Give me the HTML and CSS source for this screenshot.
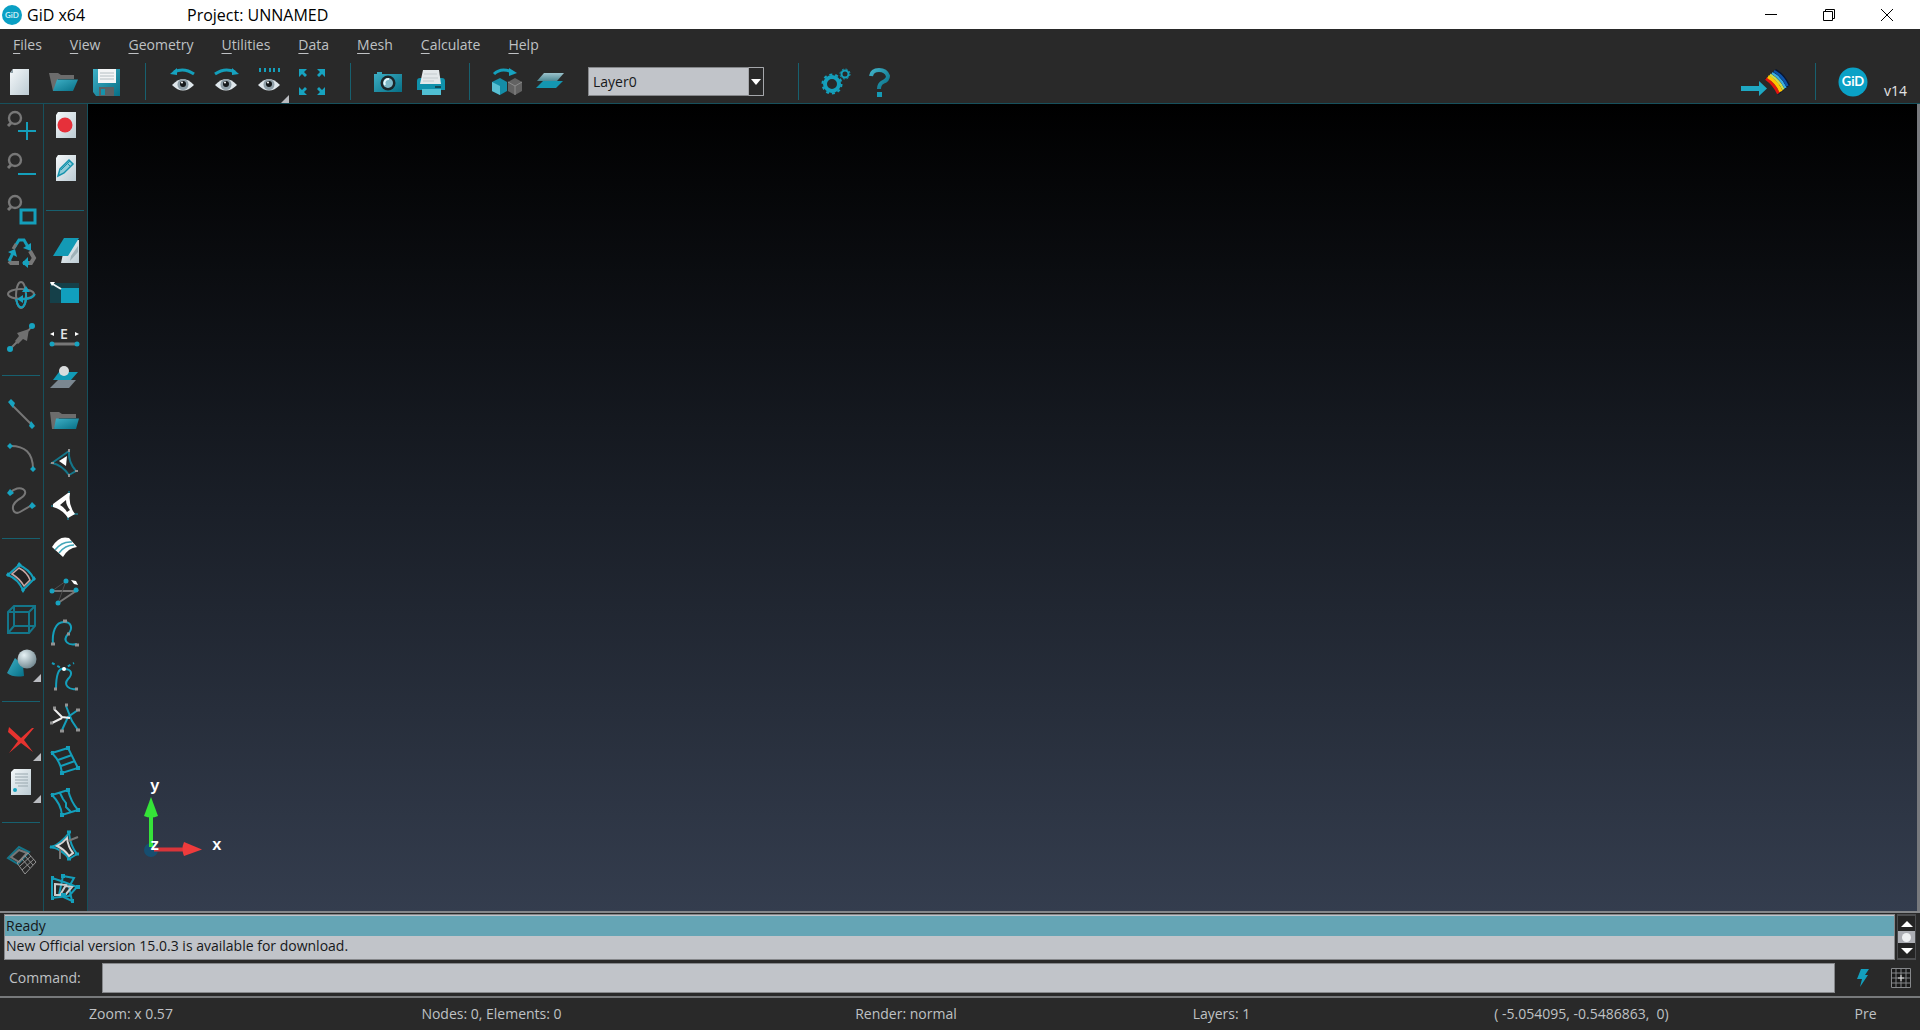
FILE: index.html
```html
<!DOCTYPE html>
<html lang="en">
<head>
<meta charset="utf-8">
<title>GiD x64</title>
<link rel="stylesheet" href="styles.css">
</head>
<body>
<svg class="defs" aria-hidden="true">
  <defs>
    <linearGradient id="paper" x1="0" y1="0" x2="1" y2="1"><stop offset="0" stop-color="#f4f8fa"/><stop offset="1" stop-color="#bccbd3"/></linearGradient>
    <linearGradient id="teal" x1="0" y1="0" x2="1" y2="1"><stop offset="0" stop-color="#3fb0c6"/><stop offset="1" stop-color="#066f86"/></linearGradient>
    <linearGradient id="sheet" x1="0" y1="0" x2="0" y2="1"><stop offset="0" stop-color="#9cc3cc"/><stop offset="1" stop-color="#4d8893"/></linearGradient>
    <radialGradient id="ball" cx=".35" cy=".3" r=".75"><stop offset="0" stop-color="#e6f2f5"/><stop offset="1" stop-color="#71878f"/></radialGradient>
    <g id="lens"><circle cx="15" cy="14" r="6" fill="none" stroke="#777" stroke-width="2.4"/><path d="M11 19 8 22" stroke="#777" stroke-width="3"/></g>
    <g id="eye"><path d="M10 24Q21 12 32 24 21 35 10 24Z" fill="#dfe7ec"/><circle cx="21" cy="23.500" r="5.500" fill="#8f9fa8"/><circle cx="21" cy="23" r="3" fill="#15191b"/><circle cx="20" cy="21.500" r="1" fill="#fff"/></g>
    <path id="corner" d="M41 34v8h-8z" fill="#b9bbc0"/>
  </defs>
</svg>

<header class="titlebar">
  <svg class="app-logo" width="20" height="20" viewBox="0 0 20 20"><circle cx="10" cy="10" r="10" fill="#0a9fc4"/><text x="10" y="13" class="logo-text-small">GiD</text></svg>
  <span class="app-name">GiD x64</span>
  <span class="project">Project: UNNAMED</span>
  <div class="window-controls">
    <button aria-label="Minimize"><svg width="14" height="14" viewBox="0 0 14 14"><path d="M1 6.500h12"/></svg></button>
    <button aria-label="Restore"><svg width="14" height="14" viewBox="0 0 14 14"><path d="M1.500 3.500h9v9h-9zM3.500 3V1.500h9v9H11"/></svg></button>
    <button aria-label="Close"><svg width="14" height="14" viewBox="0 0 14 14"><path d="M1 1 13 13M13 1 1 13"/></svg></button>
  </div>
</header>

<nav class="menubar">
  <button><u>F</u>iles</button><button><u>V</u>iew</button><button><u>G</u>eometry</button><button><u>U</u>tilities</button><button><u>D</u>ata</button><button><u>M</u>esh</button><button><u>C</u>alculate</button><button><u>H</u>elp</button>
</nav>

<div class="toolbar">
  <button class="tool" aria-label="New"><svg viewBox="0 0 42 42"><path d="M13 8H29V34H10V12Z" fill="url(#paper)"/><path d="M10 12h3V8z" fill="#8fa0a8"/></svg></button>
  <button class="tool" aria-label="Open"><svg viewBox="0 0 42 42"><path d="M6 12h9l3 2h13v4H15l-3 12h-2z" fill="#6c6c6c"/><path d="M14 18.500H35L30 30H10Z" fill="url(#teal)"/></svg></button>
  <button class="tool" aria-label="Save"><svg viewBox="0 0 42 42"><path d="M7 8H34V35H10L7 31Z" fill="url(#teal)"/><path d="M12 8H30V22H12Z" fill="#f3f5f6"/><path d="M14 12h14M14 15h14M14 18h14" stroke="#b4bec2"/><path d="M13 26h15v9H13z" fill="#5b6164"/><path d="M15 28h4v6h-4z" fill="#1593ac"/></svg></button>
  <span class="sep"></span>
  <button class="tool" aria-label="Previous view"><svg viewBox="0 0 42 42"><use href="#eye"/><path d="M12 11Q22 6 32 13" class="t w3"/><path d="M8 13 15 7v7z" class="tf"/></svg></button>
  <button class="tool" aria-label="Next view"><svg viewBox="0 0 42 42"><use href="#eye"/><path d="M10 13Q20 6 30 11" class="t w3"/><path d="M34 13 27 7v7z" class="tf"/></svg></button>
  <button class="tool" aria-label="Views"><svg viewBox="0 0 42 42"><use href="#eye"/><path d="M12 7v4M17 7v4M22 7v4M26 7v4M31 7v4" class="t w2"/><use href="#corner"/></svg></button>
  <button class="tool" aria-label="Zoom frame"><svg viewBox="0 0 42 42"><path d="M8 8h8l-3 3 3 3-2 2-3-3-3 3zM34 8v8l-3-3-3 3-2-2 3-3-3-3zM8 34v-8l3 3 3-3 2 2-3 3 3 3zM34 34h-8l3-3-3-3 2-2 3 3 3-3z" class="tf"/></svg></button>
  <span class="sep"></span>
  <button class="tool" aria-label="Snapshot"><svg viewBox="0 0 42 42"><path d="M7 13h3v-2h5v2h20v18H7z" fill="url(#teal)"/><circle cx="21" cy="22" r="7.500" fill="#1b2529"/><circle cx="21" cy="22" r="5" fill="#7fb9c9"/><path d="M18 24a4 4 0 0 1 4-6" stroke="#e8fbff" stroke-width="2" fill="none"/></svg></button>
  <button class="tool" aria-label="Print"><svg viewBox="0 0 42 42"><path d="M7 20q0-3 3-3h22q3 0 3 3v9H7z" fill="#0f91ab"/><path d="M12 28h19v6H12z" fill="#50bfd3"/><path d="M13 9h16l2 14H10z" fill="#e3e8ea"/><path d="M14 13h13M13 17h15M13 20h11" stroke="#c4cbce"/><path d="M25 26h6" stroke="#114a58" stroke-width="2"/></svg></button>
  <span class="sep"></span>
  <button class="tool" aria-label="Pre or postprocess"><svg viewBox="0 0 42 42"><path d="M8 13Q15 6 26 11" class="t w3"/><path d="M23 7 31 12 23 15z" class="tf"/><path d="M6 21 14 17 21 21V30L14 34 6 30Z" fill="#148da7"/><path d="M6 21 14 25V34L6 30Z" fill="#59bfd2"/><path d="M22 21 29 17 36 21V30L29 34 22 30Z" fill="#626262"/><path d="M22 21 29 25 36 21M29 25v9" stroke="#8b8b8b" fill="none"/></svg></button>
  <button class="tool" aria-label="Layers"><svg viewBox="0 0 42 42"><path d="M14 20H34L27 27H7Z" fill="#1496b1"/><path d="M15 12H35L28 20H8Z" fill="url(#sheet)"/></svg></button>
  <div class="combo">
    <select aria-label="Layer"><option>Layer0</option></select>
    <svg class="combo-arrow" width="16" height="29" viewBox="0 0 16 29"><path d="M.5.500h15v28H.5z" fill="#292929" stroke="#a5a7ab"/><path d="M3 12h10l-5 6z" fill="#fff"/></svg>
  </div>
  <span class="sep"></span>
  <button class="tool" aria-label="Preferences"><svg viewBox="0 0 42 42"><circle cx="17" cy="23" r="7" class="t w4"/><circle cx="17" cy="23" r="9.500" class="t w2" stroke-dasharray="3 2.970"/><circle cx="30" cy="13" r="3.500" class="t w2"/><circle cx="30" cy="13" r="5" class="t" stroke-dasharray="2 1.930"/></svg></button>
  <button class="tool" aria-label="Help"><svg viewBox="0 0 42 42"><path d="M13 15Q14 9 21 9T30 15Q30 19 25 21 21 23 21 28" fill="none" stroke="url(#teal)" stroke-width="4"/><path d="M19 31h5v5h-5z" fill="#159ab4"/></svg></button>
  <div class="brand">
    <button class="tool wide" aria-label="Switch to postprocess"><svg viewBox="0 0 52 42"><path d="M2 25H20V20L28 27.500 20 35V30H2Z" fill="#1fa8c3"/><path d="M26 18Q35 23 39 34L51 24Q46 13 37 8Z" fill="#081633"/><path d="M27 17.500Q35 23 39.500 32.500" stroke="#e3140f" stroke-width="3" fill="none"/><path d="M29 15.500Q38 21 42 30.500" stroke="#ffc400" stroke-width="3.500" fill="none"/><path d="M31 13.500Q40 19 44.500 28.500" stroke="#c8dc4c" stroke-width="2.500" fill="none"/><path d="M33 12Q42 17 46.500 27" stroke="#3bade0" stroke-width="2.500" fill="none"/><path d="M35 10Q44 15 48.500 25" stroke="#0c54ac" stroke-width="2.500" fill="none"/></svg></button>
    <span class="sep"></span>
    <svg class="gid" width="30" height="30" viewBox="0 0 30 30"><circle cx="15" cy="15" r="14.500" fill="#0aa1c6"/><text x="15" y="19" class="logo-text">GiD</text></svg>
    <span class="version">v14</span>
  </div>
</div>

<main class="workspace">
  <div class="column">
    <button class="tool" aria-label="Zoom in"><svg viewBox="0 0 42 42"><use href="#lens"/><path d="M18 27h18M27 18v18" class="t w2"/></svg></button>
    <button class="tool" aria-label="Zoom out"><svg viewBox="0 0 42 42"><use href="#lens"/><path d="M18 28h18" class="t w2"/></svg></button>
    <button class="tool" aria-label="Zoom window"><svg viewBox="0 0 42 42"><use href="#lens"/><path d="M21 22h14v13H21z" class="t w3"/></svg></button>
    <button class="tool" aria-label="Redraw"><svg viewBox="0 0 42 42"><path d="M14 18 19 10h5l4 7" class="t w3"/><path d="M31 13v8l-8-3z" class="tf"/><path d="M30 21 34 28 31 33 27 33" class="g w4"/><path d="M23 33h6" class="t w4"/><path d="M22 33 28 27v11z" class="tf"/><path d="M19 33H11L9 31" class="g w4"/><path d="M9 31 13 23" class="t w3"/><path d="M8 22 15 19 17 27z" class="tf"/><path d="M13 19 16 14" class="g w3"/></svg></button>
    <button class="tool" aria-label="Rotate"><svg viewBox="0 0 42 42"><ellipse cx="21" cy="23" rx="5" ry="13" class="g w2"/><ellipse cx="21" cy="22" rx="13" ry="5" class="g w2"/><path d="M16 27Q18 37 23 35 27 31 26 21M21 27Q32 28 35 22" class="t w2"/><path d="M22 20h8l-4-6zM23 23v8l-6-4z" class="tf"/></svg></button>
    <button class="tool" aria-label="Pan"><svg viewBox="0 0 42 42"><path d="M10 35 22 23M28 17 32 12" class="g w2"/><path d="M29 15 27 27 23 25 18 30 15 27 19 22 17 19Z" fill="#707070"/><circle cx="10" cy="35" r="3" class="tf"/><circle cx="32" cy="12" r="3" class="tf"/></svg></button>
    <span class="rule"></span>
    <button class="tool" aria-label="Line"><svg viewBox="0 0 42 42"><path d="M11 11 32 32" class="g w2"/><path d="m8 9 3-3 4 4-2 5zM29 33l2-5 4 5-3 3z" class="tf"/></svg></button>
    <button class="tool" aria-label="Arc"><svg viewBox="0 0 42 42"><path d="M9 11Q33 10 33 34" class="g w2"/><path d="m7 11 3-3 3 3-3 3zM30 34l3-3 3 3-3 3z" class="tf"/></svg></button>
    <button class="tool" aria-label="NURBS line"><svg viewBox="0 0 42 42"><path d="M10 16C19 6 32 14 21 21 8 28 13 39 20 35L32 28" class="g w2"/><path d="m7 16 3-4 4 4-4 3zM29 29l3-4 4 4-4 3z" class="tf"/></svg></button>
    <span class="rule"></span>
    <button class="tool" aria-label="Surface"><svg viewBox="0 0 42 42"><path d="M19 9 8 19Q18 23 23 34L34 23Q29 13 19 9Z" class="t w2"/><path d="M19 12 12 18Q20 23 24 30L30 24Q27 16 19 12Z" fill="#222" stroke="#c9a9a6" stroke-width="1.500"/><path d="m19 6 3 3-3 2-2-2zM8 16l2 3-2 2-2-2zM23 31l2 3-2 3-2-3zM34 20l2 3-2 2-2-2z" class="tf"/></svg></button>
    <button class="tool" aria-label="Volume"><svg viewBox="0 0 42 42"><path d="M8 14 14 8H35V28L29 35H8ZM8 14H29V35M29 14 35 8M14 8V28H35M8 35 14 28" class="d w2"/></svg></button>
    <button class="tool" aria-label="Solids"><svg viewBox="0 0 42 42"><path d="M15 18 7 33Q13 38 24 36L23 25Z" fill="url(#teal)"/><circle cx="27" cy="19" r="9.500" fill="url(#ball)"/><use href="#corner"/></svg></button>
    <span class="rule"></span>
    <button class="tool" aria-label="Delete"><svg viewBox="0 0 42 42"><path d="M9 8 21 19 32 9H34L24 21 33 33 21 24 9 34 18 22 8 13Z" fill="#e6332f"/><use href="#corner"/></svg></button>
    <button class="tool" aria-label="List"><svg viewBox="0 0 42 42"><path d="M14 8H31V34H11V11Z" fill="url(#paper)"/><path d="M15 13h13M15 16h13M15 19h13M15 22h13M18 25h10" stroke="#98a7ae"/><circle cx="15" cy="29" r="2" class="tf"/><use href="#corner"/></svg></button>
    <span class="rule"></span>
    <button class="tool" aria-label="Generate mesh"><svg viewBox="0 0 42 42"><path d="M19 7 8 18 18 24 29 12Z" class="d w2"/><path d="M19 10 11 17 19 22 27 13Z" class="g w2"/><path d="M28 13 17 23 25 34 36 22ZM25 16 33 25M22 19 30 28M20 26 31 16M22 30 34 19" class="m"/></svg></button>
  </div>

  <div class="column second">
    <button class="tool" aria-label="Record macro"><svg viewBox="0 0 42 42"><path d="M14 8H32V34H12V11Z" fill="url(#paper)"/><circle cx="21" cy="21" r="7.500" fill="#e6303a"/></svg></button>
    <button class="tool" aria-label="Edit macro"><svg viewBox="0 0 42 42"><path d="M14 8H32V34H12V11Z" fill="url(#paper)"/><path d="M14 29 16 22 25 13 29 17 20 26Z" fill="#8fcbd8" stroke="#1493ad" stroke-width="1.500"/><path d="M17 23 26 14M22 15 27 20" stroke="#1493ad"/></svg></button>
    <span class="rule tall"></span>
    <button class="tool" aria-label="Erase layer"><svg viewBox="0 0 42 42"><path d="M22 10H35V33H17Z" fill="url(#paper)"/><path d="M20 8H35L24 26H9Z" fill="#139ab5"/><path d="M27 26 34 16V22L26 31Z" fill="#9fb1b8"/></svg></button>
    <button class="tool" aria-label="Window to layer"><svg viewBox="0 0 42 42"><path d="M6 11H35V31H6Z" fill="#154049"/><path d="M17 16H35V31H17Z" fill="#119fbd"/><path d="M7 11 17 17" stroke="#eef4f5" stroke-width="2"/><path d="m6 10 5 0-3 4z" fill="#fff"/></svg></button>
    <button class="tool" aria-label="Entity length"><svg viewBox="0 0 42 42"><path d="M9 29H33" class="g w3"/><circle cx="8" cy="29" r="2.500" class="tf"/><circle cx="33" cy="29" r="2.500" class="tf"/><text x="20" y="24" class="letter">E</text><path d="m6 19 4-2v4zM35 19l-4-2v4z" fill="#fff"/></svg></button>
    <button class="tool" aria-label="Send to layer"><svg viewBox="0 0 42 42"><path d="M14 23H32L25 31H6Z" fill="#7b8790"/><path d="M15 15H34L27 23H9Z" fill="#119ab5"/><circle cx="20" cy="14" r="5" fill="#d9dcdd"/></svg></button>
    <button class="tool" aria-label="Layer folder"><svg viewBox="0 0 42 42"><path d="M6 12h9l3 2h14v4H15l-5 11H8z" fill="#6c6c6c"/><path d="M12 18.500H35L32 29H10Z" fill="url(#teal)"/></svg></button>
    <button class="tool" aria-label="Nodes"><svg viewBox="0 0 42 42"><path d="M8 21 25 9Q24 20 32 29L25 33Q18 23 8 21Z" class="d w2"/><path d="M15 19 23 14 22 24Z" fill="#fff"/><path d="M7 21h3M25 7v3M31 29h3M25 32v3" class="m w2"/></svg></button>
    <button class="tool" aria-label="Triangle"><svg viewBox="0 0 42 42"><path d="M7 21h5M25 6v5M29 29h5M24 30v5" class="t"/><path d="M9 22V19L24 8H26Q24 20 31 29L24 33Q18 24 9 22ZM16 20Q20 22 23 27L26 25Q22 20 22 15Z" fill="#fff" fill-rule="evenodd"/></svg></button>
    <button class="tool" aria-label="Smooth surface"><svg viewBox="0 0 42 42"><path d="M8 20Q15 8 25 11L33 20Q24 21 19 30Z" fill="#fff"/><path d="M11 23Q18 14 28 15M15 26Q21 18 30 18" stroke="#43a7b9" stroke-width="1.500" fill="none"/></svg></button>
    <button class="tool" aria-label="Swap"><svg viewBox="0 0 42 42"><path d="M8 21H32L14 33" class="g w2"/><path d="M8 21 22 11 14 33" stroke="#4d4d4d" fill="none"/><circle cx="8" cy="21" r="2.500" class="tf"/><circle cx="22" cy="11" r="2.500" class="tf"/><circle cx="14" cy="33" r="2.500" class="tf"/><circle cx="32" cy="20" r="2.500" class="tf"/><path d="m27 10 5 1 2 4-4-1z" fill="#fff"/></svg></button>
    <button class="tool" aria-label="Edit NURBS"><svg viewBox="0 0 42 42"><path d="M9 32C8 21 11 10 20 10 28 10 29 17 24 22 18 29 24 34 33 32" class="t w2"/><path d="M7 32h4M19 9h4M23 22h3M31 33h4" class="m w3"/></svg></button>
    <button class="tool" aria-label="Edit tangents"><svg viewBox="0 0 42 42"><path d="M12 34C12 22 14 12 20 14 28 14 29 19 24 24 19 30 25 35 32 34" class="t w2"/><path d="M8 8 19 14 30 8" class="t w2" stroke-dasharray="3 3"/><circle cx="20" cy="14" r="2" fill="#fff"/><path d="M10 34h3M31 34h3" class="m w3"/></svg></button>
    <button class="tool" aria-label="Intersect lines"><svg viewBox="0 0 42 42"><path d="M22 9 28 24 34 33M34 13 24 20 18 33" class="t w2"/><path d="M10 12 18 20 26 21M8 26 18 21" stroke="#eee" stroke-width="2" fill="none"/><path d="M9 11h3M21 8h3M32 13h4M6 26h3M16 34h4M32 33h4" class="m w3"/></svg></button>
    <button class="tool" aria-label="Divide surface"><svg viewBox="0 0 42 42"><path d="M8 13 24 8 34 28 18 33Q17 22 8 13ZM14 20 28 15M17 26 31 21" class="t w2"/><path d="M7 13h3M22 8h4M32 28h4M16 33h4" class="t w4"/></svg></button>
    <button class="tool" aria-label="Split surface"><svg viewBox="0 0 42 42"><path d="M8 13 24 8Q27 20 34 28L18 33Q17 22 8 13ZM16 11 19 17 22 21 22 25 27 30" class="t w2"/><path d="M7 13h3M22 8h4M32 28h4M16 33h4" class="t w4"/></svg></button>
    <button class="tool" aria-label="Edit surface"><svg viewBox="0 0 42 42"><path d="M8 22Q17 18 25 8 26 20 33 29L25 34Q19 25 8 22Z" class="t w2"/><path d="M13 21Q19 18 23 13 24 22 29 28L25 31Q20 24 13 21Z" fill="#292929" stroke="#d8d8d8" stroke-width="2"/><path d="M24 16 34 12M16 24v10" class="g w2"/><path d="M6 22h4M23 7h4M31 29h4M23 34h4" class="t w3"/></svg></button>
    <button class="tool" aria-label="Intersect surfaces"><svg viewBox="0 0 42 42"><path d="M8 11 20 15 33 20 25 29 8 31ZM19 9 30 11 25 20 28 34 15 28Z" class="t w2"/><path d="M11 17 22 18 16 28H11ZM22 19 28 20 22 27 17 27" fill="none" stroke="#c9cdce" stroke-width="2"/><path d="M7 11h3M7 31h3M17 9h4M32 20h4M27 34h3M17 28h5" class="t w4"/></svg></button>
  </div>

  <section class="viewport" aria-label="Model view">
    <svg class="axes" width="90" height="84" viewBox="0 0 90 84">
      <circle cx="11" cy="73" r="7" fill="#164e70"/>
      <path d="M11 70V34" stroke="#36e23a" stroke-width="4"/><path d="M11 20 18 39Q11 42 4 39Z" fill="#35e338"/>
      <path d="M14 72.500H46" stroke="#d8353a" stroke-width="4"/><path d="M62 72.500 44 65Q41 72 44 79Z" fill="#ee3b3c"/>
      <text x="10" y="14">y</text><text x="10" y="73">z</text><text x="72" y="73">x</text>
    </svg>
  </section>
</main>

<section class="messages">
  <ul class="log"><li class="current">Ready</li><li>New Official version 15.0.3 is available for download.</li></ul>
  <div class="scroll">
    <button aria-label="Scroll up"><svg width="12" height="6" viewBox="0 0 12 6"><path d="M0 6 6 0 12 6z"/></svg></button>
    <span class="thumb"></span>
    <button aria-label="Scroll down"><svg width="12" height="6" viewBox="0 0 12 6"><path d="M0 0H12L6 6z"/></svg></button>
  </div>
</section>

<form class="command">
  <label for="command">Command:</label>
  <input id="command" type="text">
  <button type="button" aria-label="Run"><svg width="12" height="18" viewBox="0 0 12 18"><path d="M4 0H12L8 6H11L3 18 5 10H0Z" fill="#139fbd"/></svg></button>
  <button type="button" aria-label="Grid"><svg width="20" height="20" viewBox="0 0 20 20"><path d="M0 0h20v20H0z" fill="#191919"/><path d="M.5.500h19v19H.5zM5 0v20M10 0v20M15 0v20M0 5h20M0 10h20M0 15h20" fill="none" stroke="#85878a"/><path d="M10 7v6M7 10h6" stroke="#ddd"/></svg></button>
</form>

<footer class="status">
  <span>Zoom: x 0.57</span><span>Nodes: 0, Elements: 0</span><span>Render: normal</span><span>Layers: 1</span><span>( -5.054095, -0.5486863,&nbsp; 0)</span><span>Pre</span>
</footer>
</body>
</html>
```
FILE: styles.css
```css
* { box-sizing: border-box; }

body {
  margin: 0;
  min-height: 100vh;
  display: flex;
  flex-direction: column;
  background: #292929;
  color: #bfc1c4;
  font: 14px/20px "Open Sans", "Noto Sans", sans-serif;
}

button, input, select { font: inherit; color: inherit; }
button { padding: 0; border: 0; background: none; }
svg { display: block; flex: none; }
.defs { position: absolute; width: 0; height: 0; }

/* shared icon strokes */
.t { stroke: #149fbb; fill: none; }
.d { stroke: #14768a; fill: none; }
.g { stroke: #777; fill: none; }
.m { stroke: #929292; fill: none; }
.tf { fill: #17a3c0; }
.w2 { stroke-width: 2; }
.w3 { stroke-width: 3; }
.w4 { stroke-width: 4; }

/* title bar */
.titlebar {
  display: flex;
  align-items: center;
  height: 29px;
  padding: 0 4px 0 2px;
  background: #fff;
  color: #000;
  font-size: 16px;
}
.app-name { width: 160px; margin-left: 5px; }
.window-controls { display: flex; margin-left: auto; }
.window-controls button { width: 58px; height: 29px; display: grid; place-items: center; }
.window-controls path { stroke: #000; fill: none; }
.logo-text-small { font: 700 8px Lato, sans-serif; fill: #c8ecf5; text-anchor: middle; }
.logo-text { font: 700 13px Lato, sans-serif; fill: #fff; text-anchor: middle; }

/* menu */
.menubar { display: flex; gap: 28px; height: 32px; padding: 0 13px; align-items: center; }
.menubar u { text-underline-offset: 3px; }

/* toolbar */
.toolbar {
  display: flex;
  align-items: center;
  height: 43px;
  padding-bottom: 1px;
  border-bottom: 1px solid #17505c;
}
.tool { flex: none; width: 43px; height: 42px; display: grid; place-items: center start; }
.tool svg { width: 42px; height: 42px; }
.tool.wide, .tool.wide svg { width: 52px; }
.tool.wide { margin-right: 8px; }
.sep { flex: none; width: 33px; height: 37px; display: grid; justify-content: center; }
.sep::before { content: ""; width: 1px; background: #17606f; }
.combo { position: relative; width: 176px; margin: 0 18px 0 16px; }
.combo select {
  display: block;
  width: 100%;
  height: 29px;
  padding: 0 4px;
  border: 1px solid #85878a;
  border-radius: 0;
  background: #c1c4c9;
  color: #16181a;
  appearance: none;
}
.combo-arrow { position: absolute; top: 0; right: 0; pointer-events: none; }
.brand { display: flex; align-items: center; margin-left: auto; padding-right: 13px; }
.gid { margin: 0 16px 0 6px; }
.version { align-self: flex-end; padding-bottom: 2px; color: #e4e4e4; }

/* tool columns and model view */
.workspace { flex: 1; display: flex; }
.column {
  flex: none;
  width: 44px;
  display: flex;
  flex-direction: column;
  border-right: 1px solid #17505c;
}
.column.second { justify-content: space-between; padding-bottom: 2px; }
.column .tool { width: 42px; }
.column .rule { height: 37px; padding: 2px 3px 0 2px; display: grid; align-content: center; }
.column .rule.tall { height: 40px; }
.rule::before { content: ""; height: 1px; background: #17606f; }
.viewport {
  flex: 1;
  display: flex;
  align-items: flex-end;
  padding: 0 52px 50px;
  border-right: 3px solid #77797d;
  background: linear-gradient(#000, #1a1f28 50%, #343d4e);
}
.axes text { font: 700 16px "Liberation Mono", monospace; fill: #fff; }
.letter { font: 600 14px "Open Sans", sans-serif; fill: #e4e4e4; text-anchor: middle; }

/* message log */
.messages {
  display: flex;
  gap: 2px;
  padding: 1px 4px 0;
  border-top: 2px solid #85878a;
}
.log {
  flex: 1;
  height: 46px;
  margin: 0;
  padding: 1px 0 0;
  border: 1px solid #85878a;
  list-style: none;
  background: #c1c4c9;
  color: #16181a;
}
.log li { padding: 0 1px; }
.log .current { background: #65a5b5; }
.scroll {
  width: 19px;
  display: flex;
  flex-direction: column;
  padding: 2px 1px;
  background: #4c4d4f;
}
.scroll button { flex: 1; display: grid; place-items: center; background: #242424; }
.scroll path { fill: #fff; }
.thumb { height: 12px; display: grid; place-items: center; background: #abadb3; }
.thumb::before { content: ""; width: 9px; height: 9px; border-radius: 50%; background: #eef0f2; }

/* command line */
.command {
  display: flex;
  align-items: center;
  height: 38px;
  padding: 0 9px;
  border-bottom: 2px solid #77797b;
}
.command label { width: 93px; }
.command input {
  flex: 1;
  min-width: 0;
  height: 30px;
  margin-right: 22px;
  border: 1px solid #85878a;
  background: #c1c4c9;
  color: #16181a;
}
.command button + button { margin-left: 22px; }

/* status bar */
.status {
  display: grid;
  grid-template-columns: 262fr 459fr 370fr 261fr 459fr 109fr;
  align-items: center;
  height: 32px;
  padding-bottom: 1px;
  text-align: center;
}
```
